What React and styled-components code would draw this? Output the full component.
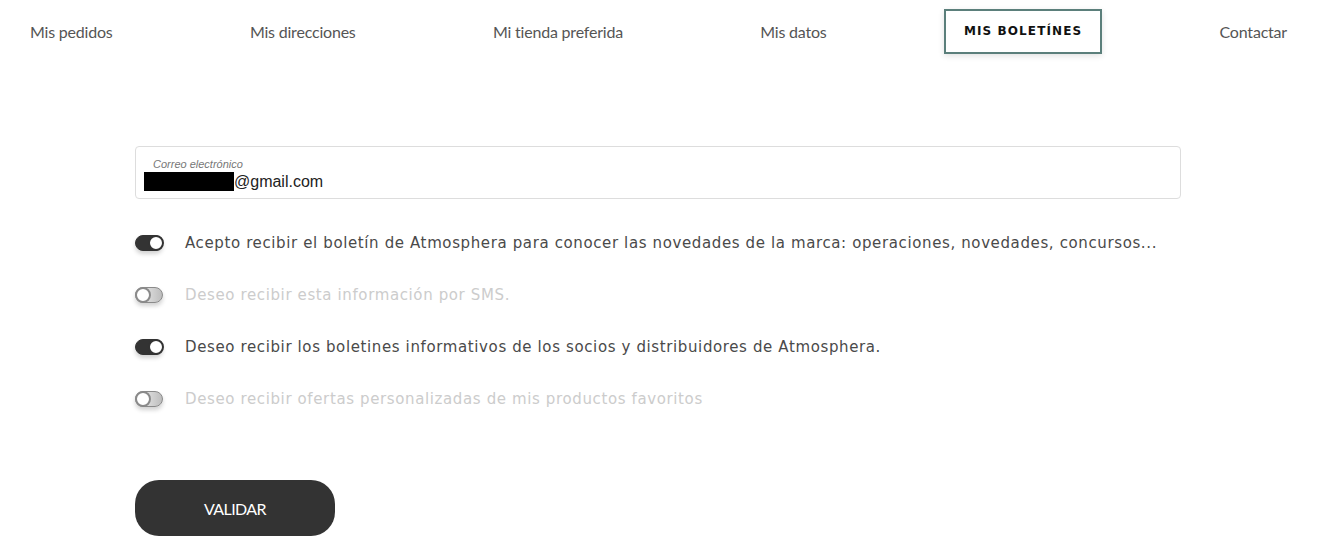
import React, { useState } from "react";
import styled, { createGlobalStyle } from "styled-components";

const GlobalStyle = createGlobalStyle`
    body {
        margin: 0;
        background: #ffffff;
        font-family: "DejaVu Sans", "Liberation Sans", sans-serif;
    }
`;

const Nav = styled.nav`
    display: flex;
    justify-content: space-between;
    align-items: center;
    padding: 8px 28px 0 10px;
    height: 46px;
`;

const NavItem = styled.a`
    padding: 0 20px;
    font-family: "Lato", sans-serif;
    font-size: 16px;
    color: #555555;
    letter-spacing: -0.2px;
    text-decoration: none;
    cursor: pointer;
`;

const ActiveItem = styled.a`
    display: flex;
    align-items: center;
    height: 41px;
    padding: 0 18px;
    border: 2px solid #5b7f7b;
    box-shadow: 0 2px 6px rgba(0, 0, 0, 0.12);
    font-family: "DejaVu Sans", sans-serif;
    font-weight: bold;
    font-size: 12px;
    letter-spacing: 1.1px;
    color: #111111;
    text-transform: uppercase;
`;

const Content = styled.main`
    width: 1046px;
    margin: 92px 0 0 135px;
`;

const Field = styled.div`
    height: 53px;
    border: 1px solid #dddddd;
    border-radius: 4px;
    padding: 11px 0 0 8px;
    box-sizing: border-box;
`;

const Label = styled.div`
    margin-left: 9px;
    font-family: "Liberation Sans", sans-serif;
    font-style: italic;
    font-size: 11px;
    color: #777777;
    line-height: 12px;
`;

const Value = styled.div`
    display: flex;
    align-items: center;
    margin-top: 2px;
    font-family: "Liberation Sans", sans-serif;
    font-size: 16px;
    color: #222222;
    line-height: 19px;
`;

const Redacted = styled.span`
    display: inline-block;
    width: 90px;
    height: 19px;
    background: #000000;
`;

const Options = styled.div`
    display: flex;
    flex-direction: column;
    gap: 30px;
    margin-top: 33px;
`;

const Row = styled.label`
    display: flex;
    align-items: center;
    gap: 22px;
    height: 22px;
    cursor: pointer;
`;

const Track = styled.span`
    position: relative;
    flex: none;
    width: 28px;
    height: 16px;
    border-radius: 8px;
    box-sizing: border-box;
    background: ${(p) => (p.$on ? "#333333" : "linear-gradient(90deg, #f4f4f4, #bdbdbd)")};
    border: 1px solid ${(p) => (p.$on ? "#333333" : "#8a8a8a")};
    box-shadow: 0 3px 4px rgba(0, 0, 0, 0.18);
`;

const Knob = styled.span`
    position: absolute;
    top: -1px;
    left: ${(p) => (p.$on ? "12px" : "-1px")};
    width: 16px;
    height: 16px;
    border-radius: 50%;
    box-sizing: border-box;
    background: #ffffff;
    border: 2px solid ${(p) => (p.$on ? "#333333" : "#8a8a8a")};
`;

const OptionText = styled.span`
    font-family: "DejaVu Sans", sans-serif;
    font-size: 15px;
    letter-spacing: 0.62px;
    white-space: nowrap;
    color: ${(p) => (p.$on ? "#4a4a4a" : "#cccccc")};
`;

const Submit = styled.button`
    margin-top: 70px;
    width: 200px;
    height: 56px;
    border: none;
    border-radius: 24px;
    background: #333333;
    color: #ffffff;
    font-family: "Lato", sans-serif;
    font-size: 16px;
    letter-spacing: -0.6px;
    cursor: pointer;
`;

const navItems = [
    "Mis pedidos",
    "Mis direcciones",
    "Mi tienda preferida",
    "Mis datos",
    "Mis boletínes",
    "Contactar",
];

const initialOptions = [
    { text: "Acepto recibir el boletín de Atmosphera para conocer las novedades de la marca: operaciones, novedades, concursos...", on: true },
    { text: "Deseo recibir esta información por SMS.", on: false },
    { text: "Deseo recibir los boletines informativos de los socios y distribuidores de Atmosphera.", on: true },
    { text: "Deseo recibir ofertas personalizadas de mis productos favoritos", on: false },
];

function App() {
    const [options, setOptions] = useState(initialOptions);

    const toggle = (i) => {
        setOptions(options.map((o, j) => (j === i ? { ...o, on: !o.on } : o)));
    };

    return (
        <>
            <GlobalStyle />
            <Nav>
                {navItems.map((item) =>
                    item === "Mis boletínes" ? (
                        <ActiveItem key={item}>{item}</ActiveItem>
                    ) : (
                        <NavItem key={item}>{item}</NavItem>
                    )
                )}
            </Nav>
            <Content>
                <Field>
                    <Label>Correo electrónico</Label>
                    <Value>
                        <Redacted />
                        @gmail.com
                    </Value>
                </Field>
                <Options>
                    {options.map((o, i) => (
                        <Row key={i} onClick={() => toggle(i)}>
                            <Track $on={o.on}>
                                <Knob $on={o.on} />
                            </Track>
                            <OptionText $on={o.on}>{o.text}</OptionText>
                        </Row>
                    ))}
                </Options>
                <Submit>VALIDAR</Submit>
            </Content>
        </>
    );
}

export default App;
